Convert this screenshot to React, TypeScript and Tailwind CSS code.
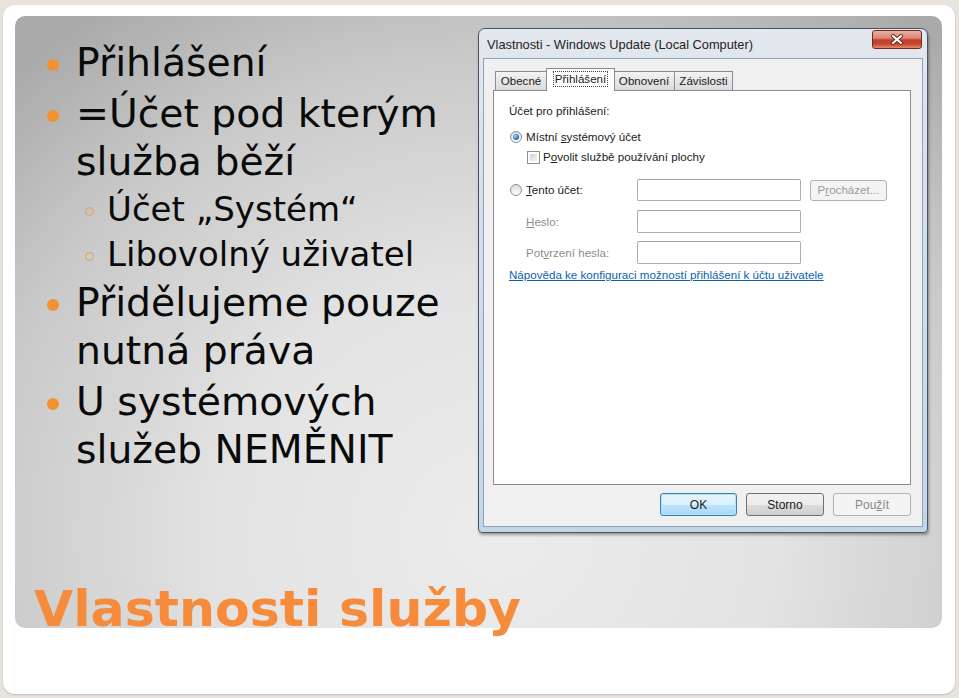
import React from "react";

function MainItem({ children, first }: { children: React.ReactNode; first?: boolean }) {
  return (
    <div className={first ? "flex" : "flex mt-[2px]"}>
      <div className="w-[61px] shrink-0">
        <div className="ml-[32px] mt-[20px] w-[12px] h-[12px] rounded-full bg-[#f39130]" />
      </div>
      <div className="text-[39.3px] leading-[48.5px] text-[#0a0a0a]">{children}</div>
    </div>
  );
}

function SubItem({ children }: { children: React.ReactNode }) {
  return (
    <div className="flex">
      <div className="w-[92px] shrink-0">
        <div className="ml-[70px] mt-[20px] w-[9px] h-[9px] rounded-full border-[1.5px] border-[#ee9a4c]" />
      </div>
      <div className="text-[34px] leading-[45px] text-[#0a0a0a]">{children}</div>
    </div>
  );
}

function Radio({ checked }: { checked?: boolean }) {
  return (
    <div className="w-[12px] h-[12px] rounded-full border border-[#8a8f96] bg-[linear-gradient(#dcdcdc,#fbfbfb)] flex items-center justify-center shrink-0">
      {checked ? (
        <div className="w-[6px] h-[6px] rounded-full bg-[radial-gradient(circle_at_35%_35%,#a9d6fa,#2e73b8_60%,#1b4e86)]" />
      ) : (
        <div className="w-[6px] h-[6px] rounded-full bg-[linear-gradient(#e2e2e2,#f7f7f7)]" />
      )}
    </div>
  );
}

function Tab({ label, w, selected }: { label: string; w: string; selected?: boolean }) {
  if (selected) {
    return (
      <div
        className={`${w} h-[23px] -ml-px -mr-[1px] relative z-10 -mb-px bg-white border border-b-0 border-[#898c95] flex items-start justify-center pt-[2px]`}
      >
        <span className="border border-dotted border-[#444] px-[1px] leading-[14px]">{label}</span>
      </div>
    );
  }
  return (
    <div
      className={`${w} h-[19px] -ml-px border border-b-0 border-[#898c95] bg-[linear-gradient(#f3f3f3,#e6e6e6_50%,#dbdbdb)] flex items-center justify-center`}
    >
      {label}
    </div>
  );
}

function Input() {
  return <div className="ml-auto w-[164px] h-full border border-[#abadb3] border-t-[#9da0a8] bg-white rounded-[2px]" />;
}

function Dialog() {
  return (
    <div className="mt-[12px] mr-[14px] w-[450px] h-[505px] shrink-0 rounded-t-[7px] rounded-b-[4px] border border-[#4b5562] bg-[linear-gradient(#e3e8ee,#d6e0eb_30%,#c3d5e9)] flex flex-col px-[4px] pb-[5px] font-['Liberation_Sans',Arial,sans-serif] text-[11.6px] text-[#1b1b1b] shadow-[1px_2px_3px_rgba(0,0,0,0.35)]">
      <div className="h-[29px] shrink-0 flex items-start justify-between">
        <div className="pl-[4px] mt-[8px] text-[12.8px] leading-[16px] text-[#1e1e1e]">
          Vlastnosti - Windows Update (Local Computer)
        </div>
        <div className="mt-[1px] mr-[1px] w-[50px] h-[19px] rounded-[3px] border border-[#6e2c1f] bg-[linear-gradient(#eab0a2_0%,#d9887a_42%,#c4412a_52%,#c8432b_75%,#e58a6c_100%)] flex items-center justify-center">
          <svg width="14" height="11" viewBox="0 0 14 11">
            <path d="M3 2 L11 9 M11 2 L3 9" stroke="#5a2a22" strokeWidth="4" strokeLinecap="round" />
            <path d="M3 2 L11 9 M11 2 L3 9" stroke="#ffffff" strokeWidth="2.2" strokeLinecap="round" />
          </svg>
        </div>
      </div>
      <div className="flex-1 bg-[#f0f0f0] border border-[#8ea1b8] flex flex-col pl-[9px] pr-[11px]">
        <div className="h-[31px] flex items-end pl-[3px]">
          <Tab label="Obecné" w="w-[52px]" />
          <Tab label="Přihlášení" w="w-[69px]" selected />
          <Tab label="Obnovení" w="w-[62px]" />
          <Tab label="Závislosti" w="w-[59px]" />
        </div>
        <div className="h-[395px] border border-[#898c95] bg-white flex flex-col pl-[15px] pr-[23px]">
          <div className="mt-[10px] h-[20px] flex items-center">Účet pro přihlášení:</div>
          <div className="mt-[6px] h-[20px] flex items-center pl-[1px]">
            <Radio checked />
            <span className="ml-[4px]">
              Místní <span className="underline">s</span>ystémový účet
            </span>
          </div>
          <div className="h-[20px] flex items-center pl-[18px]">
            <div className="w-[13px] h-[13px] border border-[#8f8f8f] bg-white p-[2px] shrink-0">
              <div className="w-full h-full bg-[linear-gradient(135deg,#d4d4d4,#f4f4f4)]" />
            </div>
            <span className="ml-[3px]">
              P<span className="underline">o</span>volit službě používání plochy
            </span>
          </div>
          <div className="mt-[12px] h-[22px] flex items-center pl-[1px]">
            <Radio />
            <span className="ml-[4px]">
              <span className="underline">T</span>ento účet:
            </span>
            <Input />
            <div className="ml-[9px] w-[77px] h-[21px] border border-[#adb2b5] rounded-[3px] bg-[#f4f4f4] text-[#9a9a9a] flex items-center justify-center">
              P<span className="underline">r</span>ocházet...
            </div>
          </div>
          <div className="mt-[9px] h-[23px] flex items-center pl-[17px] pr-[86px] text-[#8d8d8d]">
            <span>
              <span className="underline">H</span>eslo:
            </span>
            <Input />
          </div>
          <div className="mt-[8px] h-[23px] flex items-center pl-[17px] pr-[86px] text-[#8d8d8d]">
            <span>
              Pot<span className="underline">v</span>rzení hesla:
            </span>
            <Input />
          </div>
          <div className="mt-[2px] h-[18px] flex items-center text-[#0b5fb0] underline">
            Nápověda ke konfiguraci možností přihlášení k účtu uživatele
          </div>
        </div>
        <div className="mt-[8px] flex justify-end gap-[9px] text-[12px]">
          <div className="w-[77px] h-[23px] rounded-[3px] border border-[#3c7fb1] bg-[linear-gradient(#eaf6fd,#d9f0fc_50%,#bee6fd_51%,#a7d9f5)] shadow-[inset_0_0_0_1px_#b6e2f8] flex items-center justify-center">
            OK
          </div>
          <div className="w-[78px] h-[23px] rounded-[3px] border border-[#707070] bg-[linear-gradient(#f2f2f2,#ebebeb_50%,#dddddd_51%,#cfcfcf)] flex items-center justify-center">
            Storno
          </div>
          <div className="w-[78px] h-[23px] rounded-[3px] border border-[#adb2b5] bg-[#f4f4f4] text-[#8a8a8a] flex items-center justify-center">
            Pou<span className="underline">ž</span>ít
          </div>
        </div>
      </div>
    </div>
  );
}

export default function App() {
  return (
    <div className="w-[959px] h-[698px] bg-[#e8e4dd] pt-[5px] pl-[3px] pr-[4px] pb-[4px]">
      <div className="h-full rounded-[12px] bg-white pt-[11px] pl-[12px] pr-[13px] shadow-[0_1px_2px_rgba(0,0,0,0.18)]">
        <div className="h-[612px] rounded-[10px] bg-[radial-gradient(ellipse_75%_105%_at_52%_85%,#ececec_0%,#e3e3e3_40%,#c9c9c9_75%,#aaaaaa_100%)] flex flex-col">
          <div className="flex">
            <div className="flex-1 pt-[23px] font-['DejaVu_Sans',Verdana,sans-serif]">
              <MainItem first>Přihlášení</MainItem>
              <MainItem>
                =Účet pod kterým
                <br />
                služba běží
              </MainItem>
              <SubItem>Účet „Systém“</SubItem>
              <SubItem>Libovolný uživatel</SubItem>
              <MainItem>
                Přidělujeme pouze
                <br />
                nutná práva
              </MainItem>
              <MainItem>
                U systémových
                <br />
                služeb NEMĚNIT
              </MainItem>
            </div>
            <Dialog />
          </div>
          <div className="mt-auto -mb-[6px] pl-[19px] h-[50px] text-[50.6px] leading-[50px] font-bold text-[#f68b3b] font-['DejaVu_Sans',Verdana,sans-serif]">
            Vlastnosti služby
          </div>
        </div>
      </div>
    </div>
  );
}
